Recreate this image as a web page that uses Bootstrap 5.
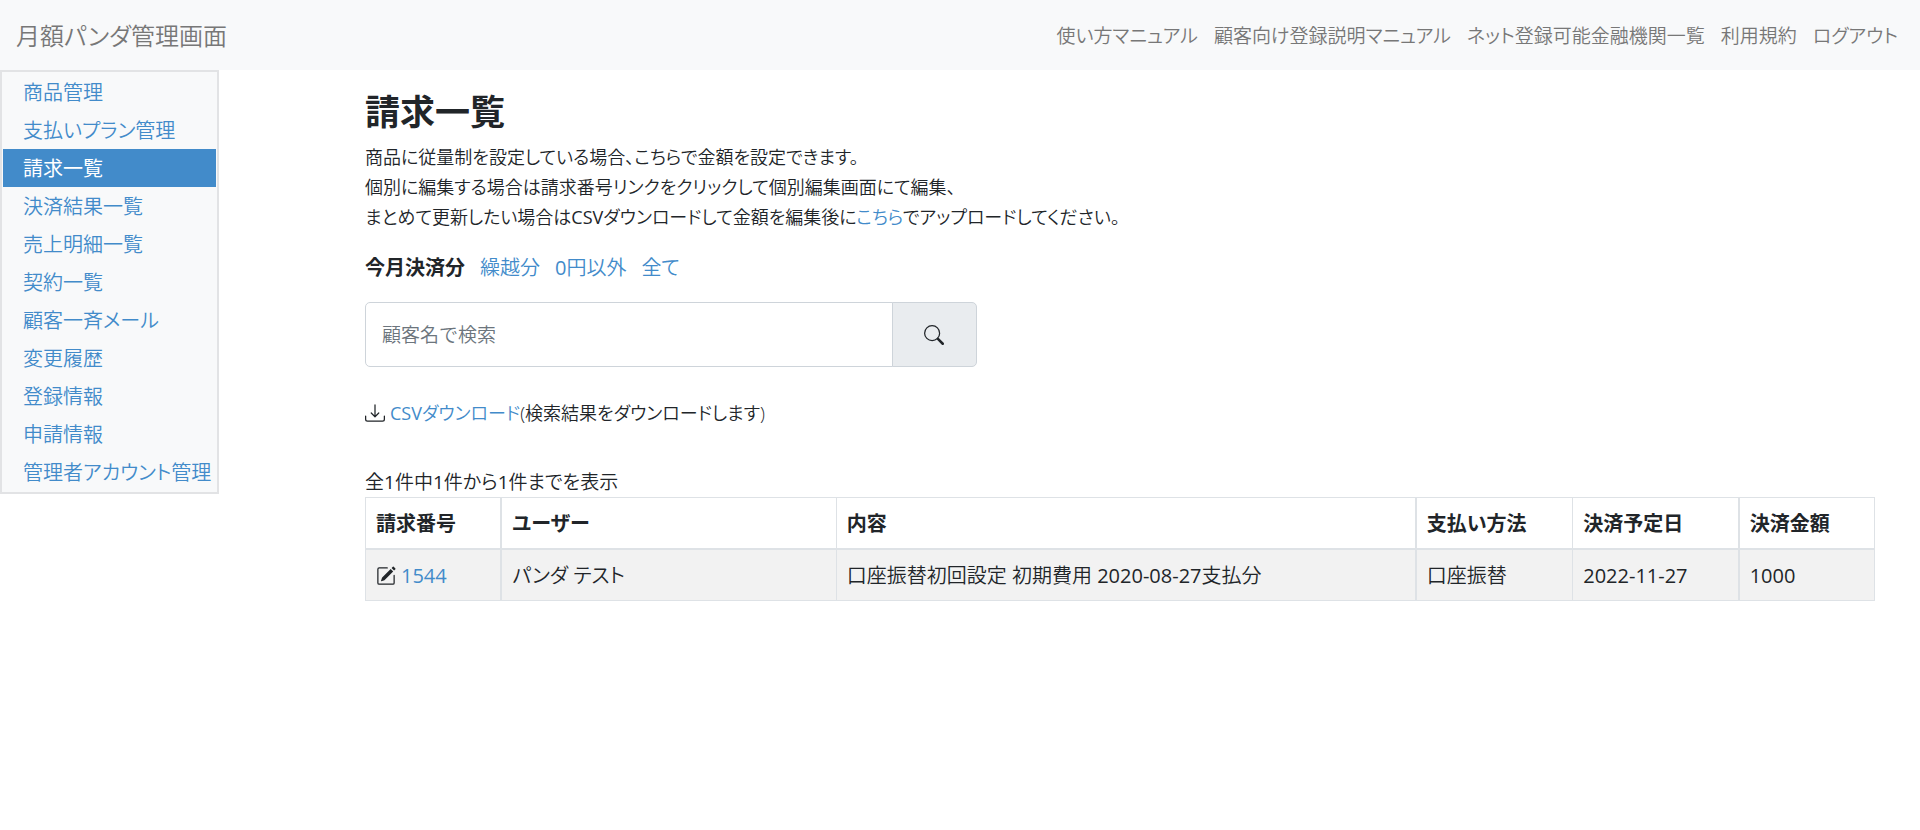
<!DOCTYPE html>
<html lang="ja">
<head>
<meta charset="utf-8">
<meta name="viewport" content="width=device-width, initial-scale=1">
<title>月額パンダ管理画面</title>
<link href="https://cdn.jsdelivr.net/npm/bootstrap@5.3.0/dist/css/bootstrap.min.css" rel="stylesheet">
<style>
body { font-family: "Open Sans", "Noto Sans CJK JP", sans-serif; font-size: 20px; line-height: 30px; font-feature-settings: "palt"; font-weight: 350; color: #212529; background: #fff; }
a { color: #428bca; text-decoration: none; }
.latin { font-weight: 400; }
.navbar { background: #f8f9fa; height: 70px; padding: 2px 14px 0 16px; }
.navbar .navbar-brand { font-size: 24px; line-height: 38px; color: #777; padding: 0; }
.navbar .nav-link { font-size: 19px; color: #777; padding: 0 11px; }
.side-menu { width: 219px; max-width: 100%; background: #f8f9fa; border: 2px solid #e2e3e5; padding: 1px; }
.side-menu .nav-link { color: #428bca; padding: 5px 0 3px 20px; border-radius: 0; white-space: nowrap; }
.side-menu .nav-link.active { background: #428bca; color: #fff; font-weight: 400; }
.page-body { padding: 21px 45px; }
h1 { font-size: 35px; line-height: 42px; font-weight: 700; margin: 0 0 9px; }
.lead-text, .csv-line { font-size: 18px; }
.filters { gap: 15px; margin: 21px 0 19px; }
.count-text { font-size: 19px; }
.search-box { max-width: 612px; height: 65px; margin-bottom: 31px; }
.search-box .form-control { font-size: 19px; font-weight: 350; border-color: #ced4da; border-radius: 5px; padding: 2px 16px 0; }
.search-box .form-control::placeholder { color: #6c757d; }
.search-box .btn { width: 85px; background: #e9ecef; border-color: #ced4da; border-radius: 5px; color: #212529; padding-bottom: 8px; }
.csv-line { margin-bottom: 39px; gap: 5px; }
.table { table-layout: fixed; border-color: #dee2e6; color: #212529; margin: 0; }
.table th, .table td { padding: 11px 10px 9px; font-weight: 350; }
.table td.latin { font-weight: 400; }
.table th { font-weight: 700; }
.table thead tr { border-bottom-width: 2px; }
.table tbody td { background: #f2f2f2; box-shadow: none; }
.table th:nth-child(odd):not(:last-child), .table td:nth-child(odd):not(:last-child) { border-right-width: 2px; }
.edit-link { gap: 5px; }
.w-no { width: 9%; } .w-user { width: 22.2%; } .w-pay { width: 10.4%; } .w-date { width: 11%; } .w-sum { width: 9%; }
</style>
</head>
<body>
<nav class="navbar navbar-expand">
  <a class="navbar-brand" href="#">月額パンダ管理画面</a>
  <div class="navbar-nav ms-auto">
    <a class="nav-link" href="#">使い方マニュアル</a>
    <a class="nav-link" href="#">顧客向け登録説明マニュアル</a>
    <a class="nav-link" href="#">ネット登録可能金融機関一覧</a>
    <a class="nav-link" href="#">利用規約</a>
    <a class="nav-link" href="#">ログアウト</a>
  </div>
</nav>
<div class="row g-0">
  <div class="col-2">
    <nav class="side-menu nav flex-column">
      <a class="nav-link" href="#">商品管理</a>
      <a class="nav-link" href="#">支払いプラン管理</a>
      <a class="nav-link active" aria-current="page" href="#">請求一覧</a>
      <a class="nav-link" href="#">決済結果一覧</a>
      <a class="nav-link" href="#">売上明細一覧</a>
      <a class="nav-link" href="#">契約一覧</a>
      <a class="nav-link" href="#">顧客一斉メール</a>
      <a class="nav-link" href="#">変更履歴</a>
      <a class="nav-link" href="#">登録情報</a>
      <a class="nav-link" href="#">申請情報</a>
      <a class="nav-link" href="#">管理者アカウント管理</a>
    </nav>
  </div>
  <main class="col-10 page-body">
    <h1>請求一覧</h1>
    <p class="lead-text m-0">商品に従量制を設定している場合、こちらで金額を設定できます。<br>個別に編集する場合は請求番号リンクをクリックして個別編集画面にて編集、<br>まとめて更新したい場合は<span class="latin">CSV</span>ダウンロードして金額を編集後に<a href="#">こちら</a>でアップロードしてください。</p>
    <div class="filters d-flex">
      <strong>今月決済分</strong>
      <a href="#">繰越分</a>
      <a href="#"><span class="latin">0</span>円以外</a>
      <a href="#">全て</a>
    </div>
    <form class="search-box input-group" role="search">
      <input type="text" class="form-control" placeholder="顧客名で検索" aria-label="顧客名で検索">
      <button class="btn" type="button" aria-label="検索"><svg width="20" height="20" viewBox="0 0 16 16" fill="currentColor"><path fill-rule="evenodd" d="M10.442 10.442a1 1 0 0 1 1.415 0l3.850 3.850a1 1 0 0 1-1.414 1.415l-3.850-3.850a1 1 0 0 1 0-1.415z"/><path fill-rule="evenodd" d="M6.500 12a5.500 5.500 0 1 0 0-11 5.500 5.500 0 0 0 0 11zM13 6.500a6.500 6.500 0 1 1-13 0 6.500 6.500 0 0 1 13 0z"/></svg></button>
    </form>
    <div class="csv-line d-flex align-items-center">
      <svg width="20" height="20" viewBox="0 0 16 16" fill="currentColor" aria-hidden="true"><path d="M.5 9.900a.5.5 0 0 1 .5.5v2.500a1 1 0 0 0 1 1h12a1 1 0 0 0 1-1v-2.500a.5.5 0 0 1 1 0v2.500a2 2 0 0 1-2 2H2a2 2 0 0 1-2-2v-2.500a.5.5 0 0 1 .5-.5z"/><path d="M7.646 11.354a.5.5 0 0 0 .708 0l3-3a.5.5 0 0 0-.708-.708L8.500 9.793V1.500a.5.5 0 0 0-1 0v8.293L5.354 7.646a.5.5 0 1 0-.708.708l3 3z"/></svg>
      <span><a href="#"><span class="latin">CSV</span>ダウンロード</a>(検索結果をダウンロードします)</span>
    </div>
    <div class="count-text">全<span class="latin">1</span>件中<span class="latin">1</span>件から<span class="latin">1</span>件までを表示</div>
    <table class="table table-bordered">
      <colgroup><col class="w-no"><col class="w-user"><col><col class="w-pay"><col class="w-date"><col class="w-sum"></colgroup>
      <thead>
        <tr><th>請求番号</th><th>ユーザー</th><th>内容</th><th>支払い方法</th><th>決済予定日</th><th>決済金額</th></tr>
      </thead>
      <tbody>
        <tr>
          <td class="latin"><div class="edit-link d-flex align-items-center"><svg width="20" height="20" viewBox="0 0 16 16" fill="currentColor" aria-hidden="true"><path d="M15.502 1.940a.5.5 0 0 1 0 .706L14.459 3.690l-2-2L13.502.646a.5.5 0 0 1 .707 0l1.293 1.293zm-1.750 2.456-2-2L4.939 9.210a.5.5 0 0 0-.121.196l-.805 2.414a.250.250 0 0 0 .316.316l2.414-.805a.5.5 0 0 0 .196-.120l6.813-6.814z"/><path fill-rule="evenodd" d="M1 13.500A1.500 1.500 0 0 0 2.500 15h11a1.500 1.500 0 0 0 1.500-1.500v-6a.5.5 0 0 0-1 0v6a.5.5 0 0 1-.5.5h-11a.5.5 0 0 1-.5-.5v-11a.5.5 0 0 1 .5-.5H9a.5.5 0 0 0 0-1H2.500A1.500 1.500 0 0 0 1 2.500v11z"/></svg><a href="#">1544</a></div></td>
          <td>パンダ テスト</td><td>口座振替初回設定 初期費用 <span class="latin">2020-08-27</span>支払分</td><td>口座振替</td><td class="latin">2022-11-27</td><td class="latin">1000</td>
        </tr>
      </tbody>
    </table>
  </main>
</div>
<script src="https://cdn.jsdelivr.net/npm/bootstrap@5.3.0/dist/js/bootstrap.bundle.min.js"></script>
</body>
</html>
